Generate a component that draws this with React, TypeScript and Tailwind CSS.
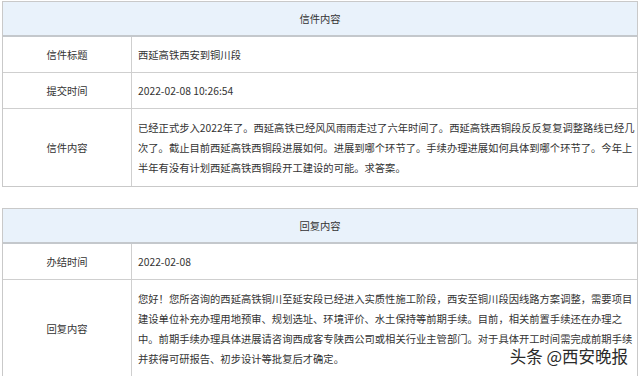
import React from 'react'

interface Row {
  label: string
  lines: string[]
  h: string
}

const font = { fontFamily: '"Microsoft YaHei", "Noto Sans CJK SC", "Noto Sans", sans-serif' }

const letterRows: Row[] = [
  { label: '信件标题', lines: ['西延高铁西安到铜川段'], h: 'h-[36px]' },
  { label: '提交时间', lines: ['2022-02-08 10:26:54'], h: 'h-[36px]' },
  {
    label: '信件内容',
    lines: [
      '已经正式步入2022年了。西延高铁已经风风雨雨走过了六年时间了。西延高铁西铜段反反复复调整路线已经几',
      '次了。截止目前西延高铁西铜段进展如何。进展到哪个环节了。手续办理进展如何具体到哪个环节了。今年上',
      '半年有没有计划西延高铁西铜段开工建设的可能。求答案。',
    ],
    h: 'h-[77px]',
  },
]

const replyRows: Row[] = [
  { label: '办结时间', lines: ['2022-02-08'], h: 'h-[36px]' },
  {
    label: '回复内容',
    lines: [
      '您好！您所咨询的西延高铁铜川至延安段已经进入实质性施工阶段，西安至铜川段因线路方案调整，需要项目',
      '建设单位补充办理用地预审、规划选址、环境评价、水土保持等前期手续。目前，相关前置手续还在办理之',
      '中。前期手续办理具体进展请咨询西成客专陕西公司或相关行业主管部门。对于具体开工时间需完成前期手续',
      '并获得可研报告、初步设计等批复后才确定。',
    ],
    h: 'h-[97px]',
  },
]

const InfoTable: React.FC<{ title: string; rows: Row[] }> = ({ title, rows }) => (
  <div className="mx-[2px] border border-[#c9c9c9]">
    <div className="flex h-[35px] items-center justify-center border-b-2 border-[#c4c8cc] bg-[#e9f2fb]">
      {title}
    </div>
    {rows.map((row, i) => (
      <div
        key={row.label}
        className={`flex ${row.h} ${i < rows.length - 1 ? 'border-b border-[#cfcfcf]' : ''}`}
      >
        <div className="flex w-[129px] shrink-0 items-center justify-center border-r border-[#cfcfcf]">
          {row.label}
        </div>
        <div className="flex flex-1 flex-col justify-center pl-[6px] leading-[20px]">
          {row.lines.map((line) => (
            <div key={line} className="whitespace-nowrap">
              {line}
            </div>
          ))}
        </div>
      </div>
    ))}
  </div>
)

export default function App() {
  return (
    <div
      className="relative h-[376px] w-[640px] overflow-hidden bg-white pt-[1px] text-[10.3px] text-[#333]"
      style={font}
    >
      <InfoTable title="信件内容" rows={letterRows} />
      <div className="h-[21px]" />
      <InfoTable title="回复内容" rows={replyRows} />

      {/* watermark */}
      <div className="absolute right-[12px] top-[348px] text-[16.5px] leading-none text-[#2a2a2a] [text-shadow:0_0_2px_#fff,0_0_2px_#fff]">
        头条 @西安晚报
      </div>
    </div>
  )
}
